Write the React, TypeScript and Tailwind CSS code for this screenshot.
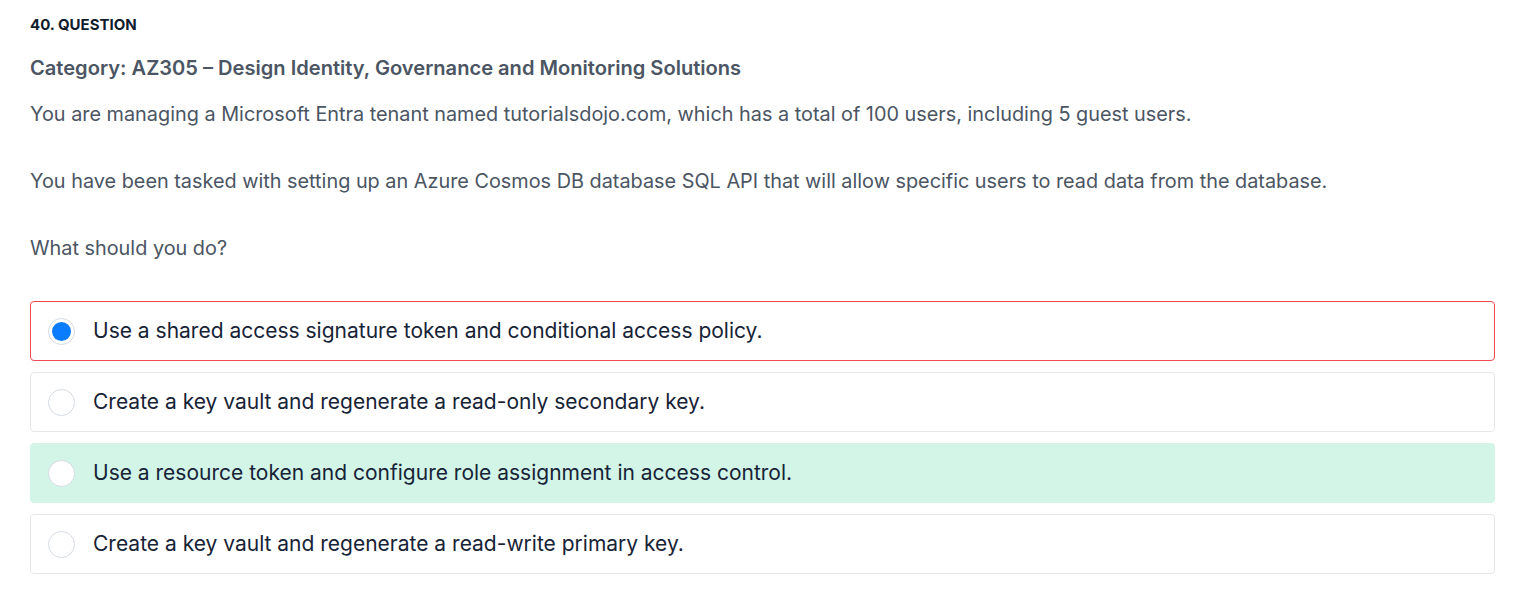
const options = [
  { text: "Use a shared access signature token and conditional access policy.", state: "wrong" },
  { text: "Create a key vault and regenerate a read-only secondary key.", state: "none" },
  { text: "Use a resource token and configure role assignment in access control.", state: "correct" },
  { text: "Create a key vault and regenerate a read-write primary key.", state: "none" },
];

function Radio({ checked }: { checked: boolean }) {
  return (
    <span className="flex h-[27px] w-[27px] shrink-0 items-center justify-center rounded-full border border-[#d5dae3] bg-white">
      {checked && <span className="h-[19px] w-[19px] rounded-full bg-[#0a7cff]" />}
    </span>
  );
}

export default function App() {
  return (
    <div className="min-h-[602px] bg-white px-[30px] pt-[16px] font-['Inter',sans-serif]">
      <div className="text-[15px] font-bold leading-[18px] text-[#0f1c2e]">40. QUESTION</div>
      <div className="mt-[21px] text-[20.1px] font-semibold leading-[27px] text-[#4b5563]">
        Category: AZ305 – Design Identity, Governance and Monitoring Solutions
      </div>
      <div className="mt-[19px] text-[19.85px] leading-[27px] text-[#4b5563]">
        <p>You are managing a Microsoft Entra tenant named tutorialsdojo.com, which has a total of 100 users, including 5 guest users.</p>
        <p className="mt-[40px]">You have been tasked with setting up an Azure Cosmos DB database SQL API that will allow specific users to read data from the database.</p>
        <p className="mt-[40px]">What should you do?</p>
      </div>
      <div className="mt-[39px] flex w-[1465px] flex-col gap-[11px]">
        {options.map((o) => (
          <div
            key={o.text}
            className={
              o.state === "wrong"
                ? "flex h-[60px] items-center gap-[18px] rounded-[4px] border border-[#ef4a53] bg-white pl-[17px]"
                : o.state === "correct"
                ? "flex h-[60px] items-center gap-[18px] rounded-[4px] border border-[#d2f5e8] bg-[#d2f5e8] pl-[17px]"
                : "flex h-[60px] items-center gap-[18px] rounded-[4px] border border-[#e6e7ea] bg-white pl-[17px]"
            }
          >
            <Radio checked={o.state === "wrong"} />
            <span className="text-[21px] leading-[28px] text-[#172336]">{o.text}</span>
          </div>
        ))}
      </div>
    </div>
  );
}
